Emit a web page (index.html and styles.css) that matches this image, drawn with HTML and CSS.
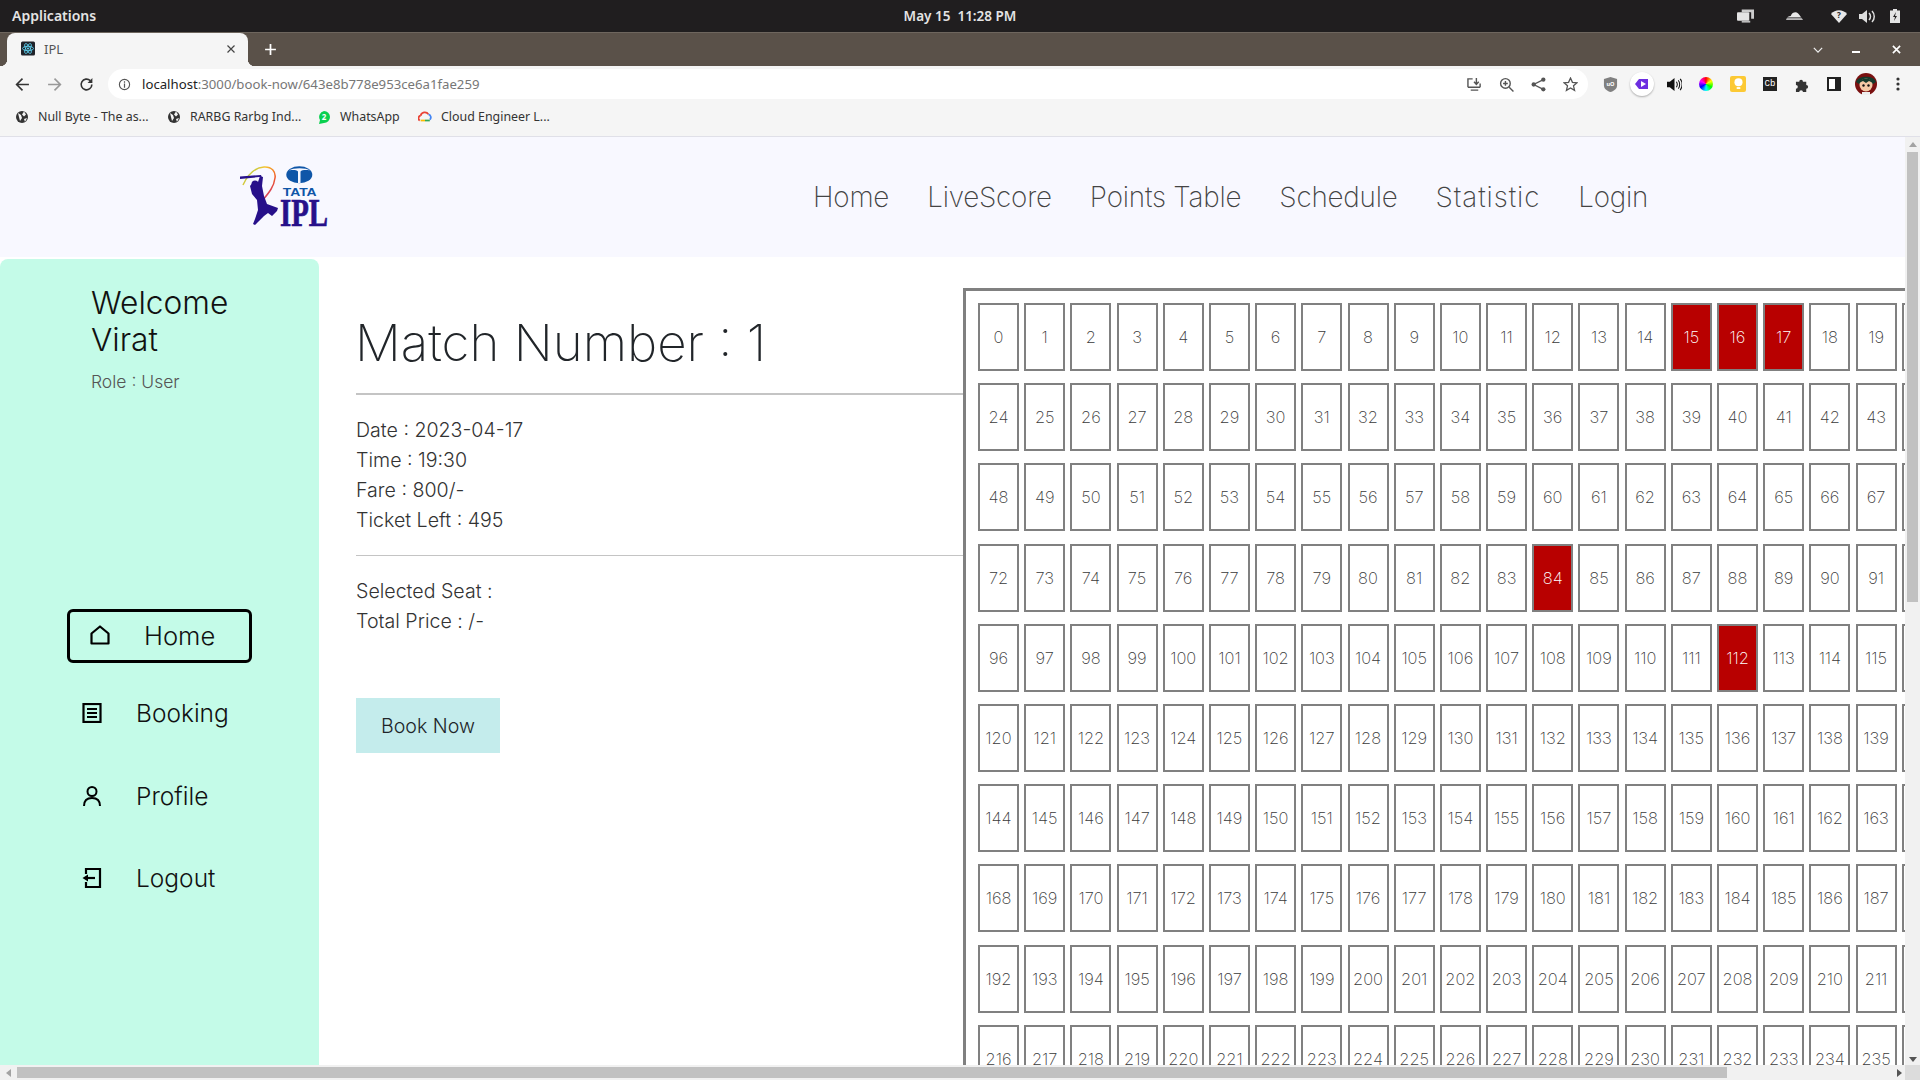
FILE: index.html
```html
<!DOCTYPE html>
<html lang="en">
<head>
<meta charset="utf-8">
<title>IPL</title>
<link rel="stylesheet" href="styles.css">
</head>
<body>
<div class="desktop">
  <header class="sysbar">
    <span class="sys-left">Applications</span>
    <span class="sys-clock">May 15&nbsp;&nbsp;11:28 PM</span>
    <div class="sys-right">
      <svg class="sys-i i1" viewBox="0 0 18 14"><path d="M5 0h13v10h-3V3H5z" fill="#ccc"/><rect x="0" y="3" width="13" height="9" rx="1" fill="#e4e4e4"/><rect x="5" y="12" width="9" height="2" fill="#bbb"/></svg>
      <svg class="sys-i i2" viewBox="0 0 18 10"><path d="M0 9c1-3 3-4 5-4 1-3 3-4 5-4 2 0 4 2 5 4l3 4z" fill="#e8e8e8"/><rect x="0" y="6.5" width="18" height="1" fill="#201e1f"/></svg>
      <svg class="sys-i i3" viewBox="0 0 16 13"><path d="M8 13L0 4c4-5 12-5 16 0z" fill="#e8e8e8"/><text x="8" y="8" class="wifi-q">?</text></svg>
      <svg class="sys-i i4" viewBox="0 0 16 13"><path d="M0 4h3l5-4v13L3 9H0z" fill="#ddd"/><path d="M10 3c2 2 2 5 0 7M13 1c3 3 3 8 0 11" stroke="#ddd" stroke-width="1.5" fill="none"/></svg>
      <svg class="sys-i i5" viewBox="0 0 10 14"><path d="M3 0h4v1.500h3V14H0V1.500h3z" fill="#e4e4e4"/><path d="M6 3L3 8h2l-1 4 3-5H5z" fill="#201e1f"/></svg>
    </div>
  </header>

  <div class="tabstrip">
    <div class="tab">
      <svg class="favicon" viewBox="0 0 14 14"><rect width="14" height="14" rx="1.500" fill="#20232a"/><g fill="none" stroke="#61dafb" stroke-width=".8"><ellipse cx="7" cy="7" rx="5.500" ry="2.200"/><ellipse cx="7" cy="7" rx="5.500" ry="2.200" transform="rotate(60 7 7)"/><ellipse cx="7" cy="7" rx="5.500" ry="2.200" transform="rotate(120 7 7)"/></g><circle cx="7" cy="7" r="1" fill="#61dafb"/></svg>
      <span class="tab-title">IPL</span>
      <svg class="tab-x" viewBox="0 0 8 8"><path d="M.5.500l7 7M7.500.500l-7 7" stroke="#444" stroke-width="1.200"/></svg>
    </div>
    <svg class="tab-plus" viewBox="0 0 12 12"><path d="M6 1v10M1 6h10" stroke="#fff" stroke-width="1.600"/></svg>
    <div class="win-ctrls">
      <svg class="win chev" viewBox="0 0 12 7"><path d="M1 1l5 5 5-5" stroke="#eee" stroke-width="1.500" fill="none"/></svg>
      <svg class="win minim" viewBox="0 0 10 3"><rect width="8" height="2" y="1" fill="#fff"/></svg>
      <svg class="win closew" viewBox="0 0 10 10"><path d="M1 1l8 8M9 1l-8 8" stroke="#fff" stroke-width="1.800"/></svg>
    </div>
  </div>

  <div class="toolbar">
    <span class="nav-cell"><svg viewBox="0 0 14 14" class="ti"><path d="M13 7H2M7 1.500L1.500 7 7 12.500" stroke="#333" stroke-width="1.500" fill="none"/></svg></span>
    <span class="nav-cell"><svg viewBox="0 0 14 14" class="ti"><path d="M1 7h11M7 1.500L12.500 7 7 12.500" stroke="#999" stroke-width="1.500" fill="none"/></svg></span>
    <span class="nav-cell"><svg viewBox="0 0 14 14" class="ti"><path d="M12 7a5 5 0 1 1-1.500-3.600" stroke="#333" stroke-width="1.500" fill="none"/><path d="M12.500 1v4.500H8z" fill="#333"/></svg></span>
    <div class="omnibox">
      <svg viewBox="0 0 14 14" class="info"><circle cx="7" cy="7" r="5.500" stroke="#555" stroke-width="1.200" fill="none"/><path d="M7 6v4.500M7 3.500v1.500" stroke="#555" stroke-width="1.300"/></svg>
      <span class="url"><span class="url-host">localhost</span>:3000/book-now/643e8b778e953ce6a1fae259</span>
      <div class="omni-icons">
        <span class="cell"><svg viewBox="0 0 16 14" class="ti"><path d="M1 10V1h5M14 6v4M1 10h13M4 13h8" stroke="#555" stroke-width="1.500" fill="none"/><path d="M10 0v6M7.500 4L10 7l2.500-3" stroke="#555" stroke-width="1.500" fill="none"/></svg></span>
        <span class="cell"><svg viewBox="0 0 14 14" class="ti"><circle cx="6" cy="6" r="4.500" stroke="#555" stroke-width="1.300" fill="none"/><path d="M9.500 9.500L13.500 13.500M3.800 6h4.400M6 3.800v4.400" stroke="#555" stroke-width="1.300"/></svg></span>
        <span class="cell"><svg viewBox="0 0 14 14" class="ti"><circle cx="2.500" cy="7" r="2" fill="#555"/><circle cx="11.500" cy="2.500" r="2" fill="#555"/><circle cx="11.500" cy="11.500" r="2" fill="#555"/><path d="M11.500 2.500l-9 4.500 9 4.500" stroke="#555" stroke-width="1.200" fill="none"/></svg></span>
        <span class="cell"><svg viewBox="0 0 14 14" class="ti"><path d="M7 1l1.800 4 4.200.400-3.200 2.800 1 4.300L7 10.200 3.200 12.500l1-4.300L1 5.400l4.200-.400z" stroke="#555" stroke-width="1.200" fill="none"/></svg></span>
      </div>
    </div>
    <div class="ext-icons">
      <span class="cell"><svg viewBox="0 0 14 16" class="ext"><path d="M0 2l7-2 7 2v7c0 4-4 6-7 7-3-1-7-3-7-7z" fill="#808080"/><text x="7" y="9.500" class="ub">uO</text></svg></span>
      <span class="cell"><span class="purple-disc"><svg viewBox="0 0 14 10" class="ext-p"><path d="M0 5l4-5h9v10H4z" fill="#6d2ee0"/><path d="M6 2l5 3-5 3z" fill="#fff"/></svg></span></span>
      <span class="cell"><svg viewBox="0 0 16 14" class="ext"><path d="M0 4h3l5-4v14L3 10H0z" fill="#111"/><path d="M10 4c1 1.500 1 4.500 0 6M12 2.500c2 2 2 7 0 9M14 1c2.800 3 2.800 9 0 12" stroke="#111" stroke-width="1.100" fill="none"/></svg></span>
      <span class="cell"><span class="wheel"></span></span>
      <span class="cell"><span class="keep"><svg viewBox="0 0 10 13" class="keep-i"><circle cx="5" cy="4.500" r="4.500" fill="#fff"/><rect x="3" y="10" width="4" height="2" fill="#fff"/></svg></span></span>
      <span class="cell"><span class="cb">Cb</span></span>
      <span class="cell"><svg viewBox="0 0 16 16" class="ext"><path d="M1 5h3.500a2 2 0 1 1 4 0H12v3.500a2 2 0 1 1 0 4V16H8.500a2 2 0 1 0-4 0H1v-3.500a2 2 0 1 0 0-4z" fill="#333"/></svg></span>
      <span class="cell"><span class="panel"></span></span>
      <span class="cell"><svg viewBox="0 0 22 22" class="avatar"><circle cx="11" cy="11" r="11" fill="#7a1010"/><path d="M1 9C3 2 19 2 21 9l-3 2H4z" fill="#153a2c"/><circle cx="11" cy="12" r="6.500" fill="#f3c9a5"/><path d="M4 10C6 4 16 4 18 10l-4-2-3 2-3-2z" fill="#153a2c"/><circle cx="8.500" cy="12.500" r="1.200" fill="#111"/><circle cx="13.500" cy="12.500" r="1.200" fill="#111"/><rect x="7" y="19" width="8" height="3" fill="#eee"/></svg></span>
      <span class="cell"><svg viewBox="0 0 4 14" class="dots"><circle cx="2" cy="2" r="1.600" fill="#333"/><circle cx="2" cy="7" r="1.600" fill="#333"/><circle cx="2" cy="12" r="1.600" fill="#333"/></svg></span>
    </div>
  </div>

  <div class="bookmarks">
    <span class="bm bm1"><svg viewBox="0 0 14 14" class="bi"><circle cx="7" cy="7" r="6" fill="#333"/><path d="M3 3l3 2 1 3-2 3-1-4zM9 1.500l2 3-2 2-2-2zM9 9l3-1-2 4z" fill="#f5f5f5"/></svg>Null Byte - The as...</span>
    <span class="bm bm2"><svg viewBox="0 0 14 14" class="bi"><circle cx="7" cy="7" r="6" fill="#333"/><path d="M3 3l3 2 1 3-2 3-1-4zM9 1.500l2 3-2 2-2-2zM9 9l3-1-2 4z" fill="#f5f5f5"/></svg>RARBG Rarbg Ind...</span>
    <span class="bm bm3"><svg viewBox="0 0 14 14" class="bi"><path d="M7 1a6 6 0 0 1 0 12l-5 1 1-4A6 6 0 0 1 7 1z" fill="#0ad04f"/><text x="7" y="10" class="wa">2</text></svg>WhatsApp</span>
    <span class="bm bm4"><svg viewBox="0 0 16 14" class="bi"><path d="M2 11a3 3 0 0 1 1-5.500" stroke="#ea4335" stroke-width="2" fill="none"/><path d="M3 5.500A5 5 0 0 1 12 4" stroke="#ea4335" stroke-width="2" fill="none"/><path d="M12 4a3.500 3.500 0 0 1 1.500 6" stroke="#4285f4" stroke-width="2" fill="none"/><path d="M13.500 11H8" stroke="#34a853" stroke-width="2"/><path d="M8 11H3" stroke="#fbbc04" stroke-width="2"/></svg>Cloud Engineer L...</span>
  </div>

  <div class="window-body">
    <div class="viewport">
      <div class="page">
        <nav class="topnav">
          <svg class="logo" viewBox="0 0 90 64">
            <defs>
              <linearGradient id="arc" x1="0" y1="0" x2="1" y2="1">
                <stop offset="0" stop-color="#7ed957"/>
                <stop offset=".35" stop-color="#f7c331"/>
                <stop offset=".65" stop-color="#f05a28"/>
                <stop offset="1" stop-color="#b01fa8"/>
              </linearGradient>
            </defs>
            <path d="M3 21C8 10 15 3.500 24 3C32 2.500 36 8 35 14C34 22 30 28 21 38" stroke="url(#arc)" stroke-width="1.500" fill="none"/>
            <path d="M0 12.500l21-1.500.700 1.800L0 15z" fill="#27108a"/>
            <circle cx="15" cy="20" r="3.500" fill="#27108a"/>
            <path d="M10 22L14 17L18 18L20 12L23 13L22 22L24 32L27 40L38 44L37 47L32 52L28 49L24 52L18 58L15 61L13 60L15 55L18 46L17 36L12 30z" fill="#27108a"/>
            <ellipse cx="59.300" cy="10.700" rx="13" ry="8.500" fill="#0f56a8"/>
            <path d="M49 6.500C53 3.500 66 3.500 70 6.500C66 5.800 62 6 60.500 7.500V19.200H58V7.500C56.500 6 53 5.800 49 6.500z" fill="#f8f8ff"/>
            <text x="42.700" y="32.300" class="logo-tata" textLength="34" lengthAdjust="spacingAndGlyphs">TATA</text>
            <text x="40" y="62" class="logo-ipl" textLength="48" lengthAdjust="spacingAndGlyphs">IPL</text>
          </svg>
          <div class="nav-links">
            <a class="nav-link">Home</a>
            <a class="nav-link">LiveScore</a>
            <a class="nav-link">Points Table</a>
            <a class="nav-link">Schedule</a>
            <a class="nav-link wide">Statistic</a>
            <a class="nav-link">Login</a>
          </div>
        </nav>

        <div class="content">
          <aside class="sidebar">
            <div class="welcome">
              <h2 class="welcome-title">Welcome<br>Virat</h2>
              <p class="role">Role : User</p>
            </div>
            <ul class="side-menu">
              <li class="side-item active">
                <svg class="side-icon" viewBox="0 0 20 20"><path d="M1.500 8.500L10 1.500l8.500 7V18.500h-17z" stroke="#000" stroke-width="2.200" fill="none" stroke-linejoin="round"/></svg>
                <span>Home</span>
              </li>
              <li class="side-item booking">
                <svg class="side-icon" viewBox="0 0 20 20"><rect x="1.500" y="1" width="17" height="18" stroke="#000" stroke-width="2.200" fill="none"/><path d="M5 6h10M5 10h10M5 14h10" stroke="#000" stroke-width="2"/></svg>
                <span>Booking</span>
              </li>
              <li class="side-item profile">
                <svg class="side-icon" viewBox="0 0 20 20"><circle cx="10" cy="5.500" r="4.500" stroke="#000" stroke-width="2" fill="none"/><path d="M2 20c0-5 3-8 8-8s8 3 8 8" stroke="#000" stroke-width="2" fill="none"/></svg>
                <span>Profile</span>
              </li>
              <li class="side-item logout">
                <svg class="side-icon" viewBox="0 0 20 20"><path d="M4 6V1h14v18H4v-5" stroke="#000" stroke-width="2.200" fill="none"/><path d="M13 10H5" stroke="#000" stroke-width="2.200"/><path d="M6 6.500L0.500 10 6 13.500z" fill="#000"/></svg>
                <span>Logout</span>
              </li>
            </ul>
          </aside>

          <main class="details">
            <h1 class="match-title">Match Number : 1</h1>
            <hr class="rule thick">
            <div class="info-block">
              <p>Date : 2023-04-17</p>
              <p>Time : 19:30</p>
              <p>Fare : 800/-</p>
              <p>Ticket Left : 495</p>
            </div>
            <hr class="rule">
            <div class="info-block selected">
              <p>Selected Seat :</p>
              <p>Total Price : /-</p>
            </div>
            <button class="book-btn">Book Now</button>
          </main>

          <section class="seat-panel">
            <div class="seat-grid" id="seats"></div>
          </section>
        </div>
      </div>
    </div>
    <div class="vscroll">
      <span class="arrow up"></span>
      <span class="vthumb"></span>
      <span class="arrow down"></span>
    </div>
    <div class="hscroll">
      <span class="arrow left"></span>
      <span class="hthumb"></span>
      <span class="arrow right"></span>
    </div>
    <div class="corner"></div>
  </div>
</div>
<script src="script.js"></script>
</body>
</html>
```
FILE: styles.css
```css
* { box-sizing: border-box; }
html, body { margin: 0; padding: 0; width: 1920px; height: 1080px; overflow: hidden; background: #fff; }
.desktop { width: 1920px; height: 1080px; display: flex; flex-direction: column; font-family: "Noto Sans", sans-serif; }

.sysbar { height: 32px; flex: none; background: #201e1f; color: #e4e4e4; display: grid; grid-template-columns: 1fr auto 1fr; align-items: center; padding: 0 12px; font-weight: 600; }
.sys-left { font-size: 14px; margin-bottom: 2px; }
.sys-clock { font-size: 13.500px; }
.sys-right { display: flex; justify-content: flex-end; align-items: center; }
.sys-i { display: block; }
.i1 { width: 17px; height: 14px; margin-right: 32px; }
.i2 { width: 17px; height: 10px; margin-right: 28px; }
.i3 { width: 16px; height: 13px; margin-right: 12px; }
.i4 { width: 16px; height: 13px; margin-right: 15px; }
.i5 { width: 10px; height: 14px; margin-right: 8px; }
.wifi-q { font: 700 8px "Noto Sans", sans-serif; text-anchor: middle; fill: #201e1f; }

.tabstrip { height: 34px; flex: none; background: #5a5149; border-top: 1px solid #6e665e; display: flex; align-items: stretch; padding-left: 7px; }
.tab { width: 241px; background: #f5f5f5; border-radius: 8px 8px 0 0; display: flex; align-items: center; padding: 0 0 2px 14px; color: #555; font-size: 13px; position: relative; }
.tab::before, .tab::after { content: ""; position: absolute; bottom: 0; width: 7px; height: 7px; }
.tab::before { left: -7px; background: radial-gradient(circle at 0 0, #5a5149 7px, #f5f5f5 7.500px); }
.tab::after { right: -7px; background: radial-gradient(circle at 100% 0, #5a5149 7px, #f5f5f5 7.500px); }
.favicon { width: 14px; height: 15px; margin-right: 9px; }
.tab-title { flex: 1; }
.tab-x { width: 8px; height: 8px; margin-right: 13px; }
.tab-plus { width: 13px; height: 13px; align-self: center; margin: 0 0 1px 16px; }
.win-ctrls { margin-left: auto; display: flex; align-items: center; }
.win { display: block; }
.chev { width: 10px; height: 6px; margin-right: 29px; }
.minim { width: 10px; height: 3px; margin-right: 30px; margin-top: 4px; }
.closew { width: 9px; height: 9px; margin-right: 19px; }

.toolbar { height: 39px; flex: none; background: #f5f5f5; display: flex; align-items: center; padding: 0 0 3px 6px; }
.nav-cell { width: 32px; display: flex; justify-content: center; align-items: center; }
.ti { width: 15px; height: 15px; display: block; }
.omnibox { width: 1480px; height: 30px; margin-left: 6px; background: #fff; border-radius: 15px; display: flex; align-items: center; padding-left: 10px; font-size: 13.200px; color: #777; }
.info { width: 13px; height: 13px; margin-right: 11px; }
.url-host { color: #222; }
.omni-icons { margin-left: auto; display: flex; padding-right: 5px; }
.cell { width: 32px; height: 30px; display: flex; justify-content: center; align-items: center; }
.omni-icons .cell { width: 26px; margin-left: 6px; }
.omni-icons .cell:first-child { margin-left: 0; }
.ext-icons { display: flex; margin-left: 6px; }
.ext { width: 15px; height: 15px; display: block; }
.ub { font: 700 6px "Noto Sans", sans-serif; text-anchor: middle; fill: #fff; }
.purple-disc { width: 24px; height: 24px; border-radius: 50%; background: #fff; box-shadow: 0 1px 2px rgba(0,0,0,.3); display: flex; align-items: center; justify-content: center; }
.ext-p { width: 14px; height: 10px; }
.wheel { width: 14px; height: 14px; border-radius: 50%; background: conic-gradient(#f00, #ff0, #0f0, #0ff, #00f, #f0f, #f00); }
.keep { width: 16px; height: 16px; border-radius: 2px; background: #fcc934; display: flex; align-items: center; justify-content: center; }
.keep-i { width: 9px; height: 12px; }
.cb { width: 14px; height: 14px; background: #222; color: #fff; font: 400 9px/14px "Liberation Mono", monospace; text-align: center; }
.panel { width: 14px; height: 14px; background: #fff; border: 2px solid #222; border-right-width: 6px; }
.avatar { width: 22px; height: 22px; display: block; }
.dots { width: 4px; height: 14px; display: block; }

.bookmarks { height: 32px; flex: none; background: #f5f5f5; border-bottom: 1px solid #e0e0e8; display: flex; align-items: center; padding: 0 0 8px 15px; font-size: 12.400px; color: #333; }
.bm { display: flex; align-items: center; white-space: nowrap; }
.bi { width: 14px; height: 14px; margin-right: 9px; flex: none; }
.bm1 { width: 152px; }
.bm2 { width: 150px; }
.bm3 { width: 101px; }
.wa { font: 700 8px "Noto Sans", sans-serif; fill: #fff; text-anchor: middle; }

.window-body { flex: 1; min-height: 0; display: grid; grid-template-columns: 1fr 15px; grid-template-rows: 1fr 15px; }
.viewport { overflow: hidden; background: #fff; }
.vscroll { background: #f1f1f1; display: flex; flex-direction: column; align-items: center; padding-top: 5px; position: relative; }
.vthumb { width: 11px; height: 450px; background: #c1c1c1; margin-top: 5px; }
.hscroll { background: #f1f1f1; display: flex; align-items: center; padding-left: 6px; position: relative; }
.hthumb { width: 1710px; height: 11px; background: #c1c1c1; margin-left: 6px; }
.corner { background: #dcdcdc; }
.arrow { width: 0; height: 0; border: 4px solid transparent; display: block; }
.arrow.up { border-bottom-color: #a3a3a3; border-top-width: 0; border-bottom-width: 5px; }
.arrow.down { border-top-color: #555; border-bottom-width: 0; border-top-width: 5px; position: absolute; bottom: 3px; }
.arrow.left { border-right-color: #a3a3a3; border-left-width: 0; border-right-width: 5px; }
.arrow.right { border-left-color: #555; border-right-width: 0; border-left-width: 5px; position: absolute; right: 3px; }

.page { font-family: Inter, "Liberation Sans", sans-serif; font-weight: 300; color: #212529; }
.topnav { height: 120px; background: #f8f8ff; display: flex; align-items: center; padding-left: 240px; }
.logo { width: 90px; height: 64px; display: block; margin-top: -2px; overflow: visible; }
.logo-tata { font: 700 11px "Liberation Sans", sans-serif; fill: #0f56a8; }
.logo-ipl { font: 700 39px "Liberation Serif", serif; fill: #27108a; stroke: #27108a; stroke-width: .7px; }
.nav-links { display: flex; gap: 38px; margin-left: 483px; }
.nav-link { font-size: 27.800px; font-weight: 250; color: #444; letter-spacing: -.2px; }
.nav-link.wide { letter-spacing: .9px; }

.content { display: flex; align-items: flex-start; margin-top: 2px; }
.sidebar { flex: none; width: 319px; height: 830px; background: #c4fbe8; border-radius: 8px 8px 0 0; padding-top: 25px; color: #111; }
.welcome { padding-left: 91px; }
.welcome-title { margin: 0; font-size: 31.700px; line-height: 37px; font-weight: 300; }
.role { margin: 12px 0 0; font-size: 17.500px; line-height: 24px; color: #555; }
.side-menu { list-style: none; margin: 0; padding: 0; margin-top: 215px; }
.side-item { height: 54px; display: flex; align-items: center; font-size: 24.500px; margin-left: 82px; gap: 34px; }
.side-icon { width: 20px; height: 20px; flex: none; }
.side-item.active { margin-left: 67px; width: 185px; border: 3px solid #000; border-radius: 6px; padding: 0 0 2px 20px; gap: 34px; font-size: 25.600px; }
.side-item.booking { margin-top: 23px; }
.side-item.profile { margin-top: 29px; }
.side-item.logout { margin-top: 28px; }

.details { flex: none; width: 644px; padding: 54px 0 0 0; }
.match-title { margin: 0 0 0 36px; font-size: 51px; line-height: 60px; font-weight: 200; color: #212529; }
.rule { border: 0; height: 1px; background: #c4c4c4; margin: 0 0 0 37px; }
.rule.thick { height: 2px; margin-top: 20px; }
.info-block { margin-left: 37px; font-size: 19.600px; line-height: 30px; padding: 20px 0; color: #333; }
.info-block p { margin: 0; }
.info-block.selected { padding: 20px 0 0; }
.book-btn { display: block; margin: 62px 0 0 37px; width: 144px; height: 55px; background: #c4ecec; border: 0; padding: 0; font: 300 19.600px Inter, sans-serif; color: #212529; }

.seat-panel { flex: none; margin-top: 29px; border: solid #808080; border-width: 3px 0 0 3px; padding: 12px 0 0 12px; width: 1300px; }
.seat-grid { display: grid; grid-template-columns: repeat(24, 41px); column-gap: 5.200px; row-gap: 12.200px; }
.seat { height: 68px; border: 2px solid #808080; background: #fff; display: flex; align-items: center; justify-content: center; font-size: 16.400px; font-weight: 250; color: #3a3a3a; }
.seat.booked { background: #b80000; color: #fff; }
```
FILE: script.js
```js
var grid = document.getElementById('seats');
var booked = [15, 16, 17, 84, 112];
for (var i = 0; i < 240; i++) {
  var seat = document.createElement('div');
  seat.className = booked.indexOf(i) >= 0 ? 'seat booked' : 'seat';
  seat.textContent = i;
  grid.appendChild(seat);
}
```
